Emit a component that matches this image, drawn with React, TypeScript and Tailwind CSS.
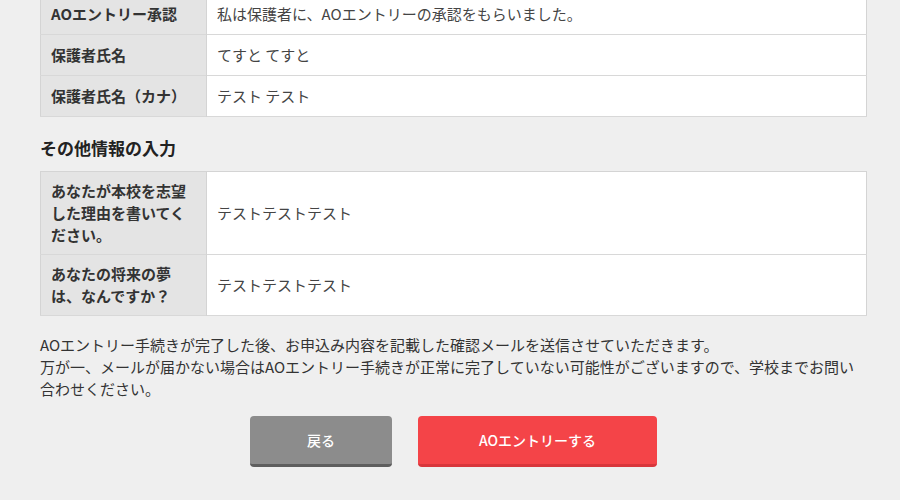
import React from "react";

const font = { fontFamily: '"Noto Sans CJK JP", "Noto Sans", sans-serif' };

type Row = { label: string; value: string };

const guardianRows: Row[] = [
  { label: "AOエントリー承認", value: "私は保護者に、AOエントリーの承認をもらいました。" },
  { label: "保護者氏名", value: "てすと てすと" },
  { label: "保護者氏名（カナ）", value: "テスト テスト" },
];

const otherRows: Row[] = [
  { label: "あなたが本校を志望した理由を書いてください。", value: "テストテストテスト" },
  { label: "あなたの将来の夢は、なんですか？", value: "テストテストテスト" },
];

const ConfirmTable = ({ rows, tight = false }: { rows: Row[]; tight?: boolean }) => (
  <table className="w-full border-collapse border border-[#d4d4d4] bg-white">
    <tbody>
      {rows.map((r) => (
        <tr key={r.label} className="border-b border-[#d8d8d8]">
          <th
            className={
              "w-[166px] bg-[#e4e4e4] border-r border-[#d4d4d4] px-[10px] text-left align-middle text-[15px] leading-[22px] font-bold text-[#333] " +
              (tight ? "py-[8px]" : "py-[9px]")
            }
          >
            {r.label}
          </th>
          <td
            className={
              "px-[10px] align-middle text-[15px] leading-[22px] text-[#444] " +
              (tight ? "py-[8px]" : "py-[9px]")
            }
          >
            {r.value}
          </td>
        </tr>
      ))}
    </tbody>
  </table>
);

const App = () => {
  return (
    <div className="min-h-[500px] w-[900px] overflow-hidden bg-[#efefef]" style={font}>
      <div className="ml-[40px] w-[827px] -mt-[7px] pb-8">
        <ConfirmTable rows={guardianRows} />

        <h2 className="mt-[19px] mb-[11px] text-[17px] leading-[24px] font-bold text-[#222]">
          その他情報の入力
        </h2>

        <ConfirmTable rows={otherRows} tight />

        <p className="mt-[18px] text-[15px] leading-[22px] text-[#333]">
          AOエントリー手続きが完了した後、お申込み内容を記載した確認メールを送信させていただきます。
          <br />
          万が一、メールが届かない場合はAOエントリー手続きが正常に完了していない可能性がございますので、学校までお問い合わせください。
        </p>

        <div className="mt-[16px] flex justify-center gap-[26px]">
          <button className="w-[142px] h-[51px] rounded-[4px] bg-[#8c8c8c] border-b-[3px] border-[#5e5e5e] text-white text-[14px] font-medium">
            戻る
          </button>
          <button className="w-[239px] h-[51px] rounded-[4px] bg-[#f44448] border-b-[3px] border-[#d8363b] text-white text-[14px] font-medium">
            AOエントリーする
          </button>
        </div>
      </div>
    </div>
  );
};

export default App;
